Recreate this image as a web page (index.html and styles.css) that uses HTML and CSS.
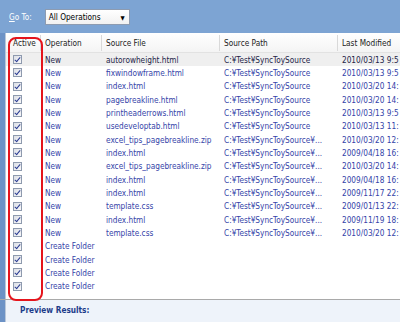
FILE: index.html
```html
<!DOCTYPE html>
<html>
  <head>
    <meta charset="UTF-8" />
    <title>SyncToy - Preview</title>
    <link rel="stylesheet" href="styles.css">
  </head>
  <body>
    <div class="window">
      <div class="toolbar">
        <div class="goto-label"><u>G</u>o To:</div>
        <div class="select">
          <span>All Operations</span>
          <span class="arrow">&#9660;</span>
        </div>
      </div>

      <div class="main">
        <div class="strip"></div>
        <div class="list">
          <div class="row header">
            <div class="cell first">Active</div>
            <div class="cell">Operation</div>
            <div class="cell">Source File</div>
            <div class="cell">Source Path</div>
            <div class="cell">Last Modified</div>
          </div>

          <div class="row selected">
            <div class="cell first"><span class="check"></span></div>
            <div class="cell">New</div>
            <div class="cell">autorowheight.html</div>
            <div class="cell">C:¥Test¥SyncToySource</div>
            <div class="cell">2010/03/13 9:5</div>
          </div>
          <div class="row">
            <div class="cell first"><span class="check"></span></div>
            <div class="cell">New</div>
            <div class="cell">fixwindowframe.html</div>
            <div class="cell">C:¥Test¥SyncToySource</div>
            <div class="cell">2010/03/13 9:5</div>
          </div>
          <div class="row">
            <div class="cell first"><span class="check"></span></div>
            <div class="cell">New</div>
            <div class="cell">index.html</div>
            <div class="cell">C:¥Test¥SyncToySource</div>
            <div class="cell">2010/03/20 14:</div>
          </div>
          <div class="row">
            <div class="cell first"><span class="check"></span></div>
            <div class="cell">New</div>
            <div class="cell">pagebreakline.html</div>
            <div class="cell">C:¥Test¥SyncToySource</div>
            <div class="cell">2010/03/20 14:</div>
          </div>
          <div class="row">
            <div class="cell first"><span class="check"></span></div>
            <div class="cell">New</div>
            <div class="cell">printheaderrows.html</div>
            <div class="cell">C:¥Test¥SyncToySource</div>
            <div class="cell">2010/03/13 9:5</div>
          </div>
          <div class="row">
            <div class="cell first"><span class="check"></span></div>
            <div class="cell">New</div>
            <div class="cell">usedeveloptab.html</div>
            <div class="cell">C:¥Test¥SyncToySource</div>
            <div class="cell">2010/03/13 11:</div>
          </div>
          <div class="row">
            <div class="cell first"><span class="check"></span></div>
            <div class="cell">New</div>
            <div class="cell">excel_tips_pagebreakline.zip</div>
            <div class="cell">C:¥Test¥SyncToySource¥...</div>
            <div class="cell">2010/03/20 12:</div>
          </div>
          <div class="row">
            <div class="cell first"><span class="check"></span></div>
            <div class="cell">New</div>
            <div class="cell">index.html</div>
            <div class="cell">C:¥Test¥SyncToySource¥...</div>
            <div class="cell">2009/04/18 16:</div>
          </div>
          <div class="row">
            <div class="cell first"><span class="check"></span></div>
            <div class="cell">New</div>
            <div class="cell">excel_tips_pagebreakline.zip</div>
            <div class="cell">C:¥Test¥SyncToySource¥...</div>
            <div class="cell">2010/03/20 14:</div>
          </div>
          <div class="row">
            <div class="cell first"><span class="check"></span></div>
            <div class="cell">New</div>
            <div class="cell">index.html</div>
            <div class="cell">C:¥Test¥SyncToySource¥...</div>
            <div class="cell">2009/04/18 16:</div>
          </div>
          <div class="row">
            <div class="cell first"><span class="check"></span></div>
            <div class="cell">New</div>
            <div class="cell">index.html</div>
            <div class="cell">C:¥Test¥SyncToySource¥...</div>
            <div class="cell">2009/11/17 22:</div>
          </div>
          <div class="row">
            <div class="cell first"><span class="check"></span></div>
            <div class="cell">New</div>
            <div class="cell">template.css</div>
            <div class="cell">C:¥Test¥SyncToySource¥...</div>
            <div class="cell">2009/01/13 22:</div>
          </div>
          <div class="row">
            <div class="cell first"><span class="check"></span></div>
            <div class="cell">New</div>
            <div class="cell">index.html</div>
            <div class="cell">C:¥Test¥SyncToySource¥...</div>
            <div class="cell">2009/11/19 18:</div>
          </div>
          <div class="row">
            <div class="cell first"><span class="check"></span></div>
            <div class="cell">New</div>
            <div class="cell">template.css</div>
            <div class="cell">C:¥Test¥SyncToySource¥...</div>
            <div class="cell">2010/03/20 12:</div>
          </div>
          <div class="row">
            <div class="cell first"><span class="check"></span></div>
            <div class="cell">Create Folder</div>
            <div class="cell"></div>
            <div class="cell"></div>
            <div class="cell"></div>
          </div>
          <div class="row">
            <div class="cell first"><span class="check"></span></div>
            <div class="cell">Create Folder</div>
            <div class="cell"></div>
            <div class="cell"></div>
            <div class="cell"></div>
          </div>
          <div class="row">
            <div class="cell first"><span class="check"></span></div>
            <div class="cell">Create Folder</div>
            <div class="cell"></div>
            <div class="cell"></div>
            <div class="cell"></div>
          </div>
          <div class="row">
            <div class="cell first"><span class="check"></span></div>
            <div class="cell">Create Folder</div>
            <div class="cell"></div>
            <div class="cell"></div>
            <div class="cell"></div>
          </div>
        </div>
      </div>

      <div class="preview">
        <div class="strip"></div>
        <div class="preview-title">Preview Results:</div>
      </div>

      <!-- annotation round the Active column -->
      <div class="highlight"></div>
    </div>
  </body>
</html>
```

FILE: styles.css
```css
* {
  box-sizing: border-box;
}

body {
  margin: 0;
  background: #ffffff;
  font-family: "DejaVu Sans Condensed", "DejaVu Sans", sans-serif;
  font-stretch: condensed;
  font-size: 8.2px;
}

.window {
  position: relative;
  width: 400px;
  height: 322px;
  overflow: hidden;
  display: flex;
  flex-direction: column;
}

.toolbar {
  height: 33px;
  background: #7da4d3;
  display: flex;
  align-items: center;
  padding-left: 9px;
  gap: 13px;
}

.goto-label {
  color: #ffffff;
}

.select {
  width: 85px;
  height: 16px;
  margin-top: 1px;
  background: linear-gradient(#ffffff, #f1f1f1);
  border: 1px solid #8d9bb0;
  display: flex;
  align-items: center;
  justify-content: space-between;
  padding: 0 4px 0 3px;
  color: #000000;
}

.arrow {
  font-size: 6px;
}

.main {
  display: flex;
  height: 266px;
}

.strip {
  width: 6px;
  flex-shrink: 0;
  background: #6c92c6;
  border-right: 1px solid #b9c7da;
}

.list {
  flex: 1;
  background: #ffffff;
}

.row {
  display: grid;
  grid-template-columns: 35px 61px 118px 118px 1fr;
  height: 13.333px;
  align-items: center;
  color: #3443a8;
  white-space: nowrap;
}

.cell {
  padding-left: 4px;
  overflow: hidden;
}

.cell.first {
  padding-left: 7px;
  display: flex;
  align-items: center;
}

.row.header {
  height: 20px;
  color: #222222;
  background: linear-gradient(#ffffff, #f4f4f4);
  border-bottom: 1px solid #e2e2e2;
}

.row.header .cell {
  height: 16px;
  line-height: 16px;
  border-right: 1px solid #d9d9d9;
}

.row.header .cell:last-child {
  border-right: none;
}

.row.selected {
  background: #efefef;
  color: #1e2448;
}

.check {
  width: 9px;
  height: 9px;
  border: 1px solid #8e9aae;
  background: linear-gradient(135deg, #dcdfe6, #f8f8fa);
  position: relative;
}

.check::after {
  content: "";
  position: absolute;
  left: 2px;
  top: 0px;
  width: 2px;
  height: 5px;
  border-right: 1.5px solid #2a3c92;
  border-bottom: 1.5px solid #2a3c92;
  transform: rotate(40deg);
}

.preview {
  flex: 1;
  display: flex;
  border-top: 1px solid #a9a9a9;
  background: #eef3fa;
}

.preview-title {
  padding: 5px 0 0 14px;
  font-weight: bold;
  color: #1d3c8a;
}

.highlight {
  position: absolute;
  left: 8px;
  top: 37px;
  width: 35px;
  height: 264px;
  border: 2px solid #e5141c;
  border-radius: 8px;
}
```
